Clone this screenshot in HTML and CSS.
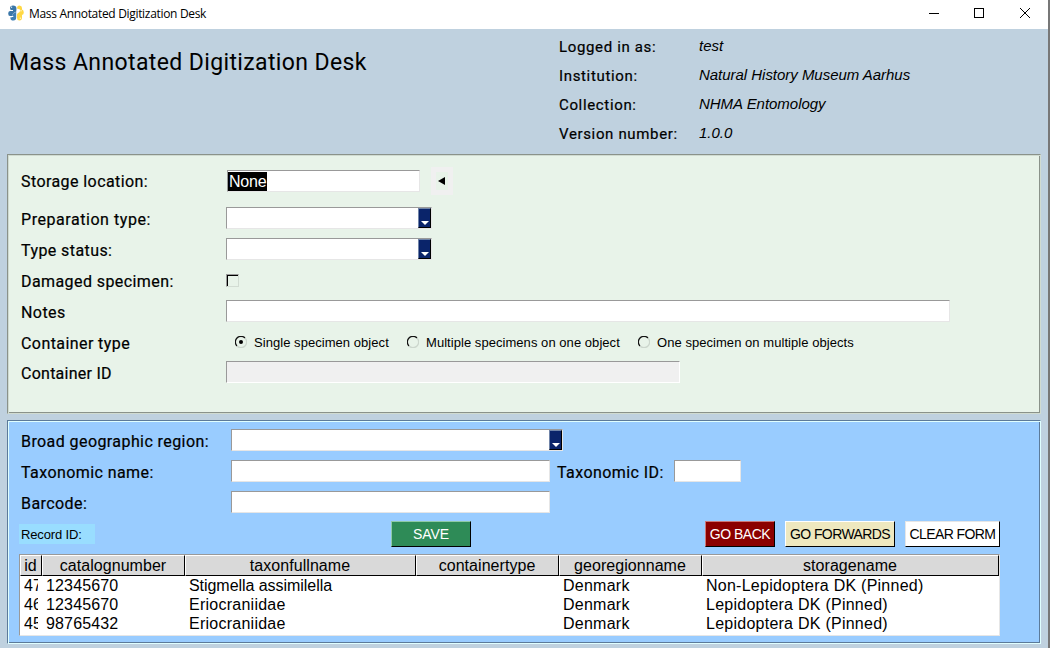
FILE: index.html
```html
<!DOCTYPE html>
<html lang="en">
<head>
<meta charset="utf-8">
<title>Mass Annotated Digitization Desk</title>
<link rel="stylesheet" href="styles.css">
</head>
<body>
<div class="window">
  <div class="titlebar">
    <svg class="logo" width="16" height="16" viewBox="0 0 16 16">
      <path d="M2 5V3Q2 .4 5 .4Q8.400 .4 8.400 3V5.500Q8.400 7 6.500 7.500Q4.500 8 4.500 10V11H2Q.2 11 .2 8.500Q.2 6.200 2 6H5V5Z" fill="#3a76a8"/>
      <path d="M4.500 11V10Q4.500 8.500 6 8Q8 7.400 8.200 6V12.500Q8.200 15.500 5.500 15.600Q2.500 15.600 2.400 13V12H5.300V11Z" fill="#3f7fb4"/>
      <path d="M9 3.500Q9 .4 11.500 .4Q14 .5 14 3V4.500Q15.800 5 15.800 7.500Q15.800 9.800 14 10V12.500Q14 15.500 11.500 15.600Q9 15.500 9 13V9.500Q9.200 8.200 10.500 7.800Q12 7.300 12 5.500V4.500Z" fill="#ffd845"/>
      <path d="M0 4.300H3M1 12H4M12 5.800H14" stroke="#fff" stroke-width=".6"/>
      <circle cx="3.600" cy="2.200" r=".6" fill="#fff"/><circle cx="12.300" cy="13.200" r=".6" fill="#fff"/>
    </svg>
    <span class="caption">Mass Annotated Digitization Desk</span>
    <svg class="controls" width="104" height="12" viewBox="0 0 104 12" fill="none" stroke="#000" shape-rendering="crispEdges">
      <path d="M0 6.500H10M45.500 1.500H54.500V10.500H45.500Z"/>
      <path d="M91 1L101 11M101 1L91 11" shape-rendering="auto"/>
    </svg>
  </div>

  <header class="header">
    <h1>Mass Annotated Digitization Desk</h1>
    <dl class="session">
      <dt>Logged in as:</dt><dd>test</dd>
      <dt>Institution:</dt><dd>Natural History Museum Aarhus</dd>
      <dt>Collection:</dt><dd>NHMA Entomology</dd>
      <dt>Version number:</dt><dd>1.0.0</dd>
    </dl>
  </header>

  <section class="panel specimen">
    <div class="row storage"><span class="label">Storage location:</span><div class="field location"><span class="selected">None</span></div><div class="collapse"><svg width="7" height="8" viewBox="0 0 7 8"><path d="M0 4L7 0V8Z"/></svg></div></div>
    <div class="row"><span class="label prep">Preparation type:</span><div class="field combo"><i class="drop"></i></div></div>
    <div class="row"><span class="label">Type status:</span><div class="field combo"><i class="drop"></i></div></div>
    <div class="row"><span class="label">Damaged specimen:</span><i class="checkbox"></i></div>
    <div class="row"><span class="label">Notes</span><div class="field notes"></div></div>
    <div class="row kinds"><span class="label">Container type</span>
      <div class="radios">
        <span class="radio one"><svg width="12" height="12" viewBox="0 0 12 12"><path class="dark" d="M2 10A5.300 5.300 0 0 1 10 2"/><path class="lite" d="M10 2A5.300 5.300 0 0 1 2 10"/><circle cx="6" cy="6" r="2"/></svg>Single specimen object</span>
        <span class="radio two"><svg width="12" height="12" viewBox="0 0 12 12"><path class="dark" d="M2 10A5.300 5.300 0 0 1 10 2"/><path class="lite" d="M10 2A5.300 5.300 0 0 1 2 10"/></svg>Multiple specimens on one object</span>
        <span class="radio three"><svg width="12" height="12" viewBox="0 0 12 12"><path class="dark" d="M2 10A5.300 5.300 0 0 1 10 2"/><path class="lite" d="M10 2A5.300 5.300 0 0 1 2 10"/></svg>One specimen on multiple objects</span>
      </div>
    </div>
    <div class="row"><span class="label tight">Container ID</span><div class="field disabled"></div></div>
  </section>

  <section class="panel taxonomy">
    <div class="row"><span class="label">Broad geographic region:</span><div class="field region"><i class="drop"></i></div></div>
    <div class="row"><span class="label">Taxonomic name:</span><div class="field wide"></div><span class="label taxid">Taxonomic ID:</span><div class="field short"></div></div>
    <div class="row"><span class="label">Barcode:</span><div class="field wide"></div></div>
    <div class="actions">
      <span class="record">Record ID:</span>
      <button class="save">SAVE</button>
      <button class="back">GO BACK</button>
      <button class="forward">GO FORWARDS</button>
      <button class="clear">CLEAR FORM</button>
    </div>
    <div class="tableframe">
      <table>
        <colgroup><col class="c1"><col class="c2"><col class="c3"><col class="c2"><col class="c2"><col class="c6"></colgroup>
        <thead><tr><th>id</th><th>catalognumber</th><th>taxonfullname</th><th>containertype</th><th>georegionname</th><th>storagename</th></tr></thead>
        <tbody>
          <tr><td><div>47</div></td><td class="num">12345670</td><td class="taxon">Stigmella assimilella</td><td></td><td>Denmark</td><td>Non-Lepidoptera DK (Pinned)</td></tr>
          <tr><td><div>46</div></td><td class="num">12345670</td><td>Eriocraniidae</td><td></td><td>Denmark</td><td>Lepidoptera DK (Pinned)</td></tr>
          <tr><td><div>45</div></td><td class="num">98765432</td><td>Eriocraniidae</td><td></td><td>Denmark</td><td>Lepidoptera DK (Pinned)</td></tr>
        </tbody>
      </table>
    </div>
  </section>
</div>
</body>
</html>
```
FILE: styles.css
```css
* { box-sizing: border-box; }
body { margin: 0; font-family: "Liberation Sans", Arial, sans-serif; color: #000; }
.window { width: 1050px; height: 648px; background: #bfd1df; border-right: 2px solid #777; overflow: hidden; }

.titlebar { height: 29px; background: #fff; display: flex; align-items: center; padding: 0 15px 3px 8px; }
.caption { margin-left: 5px; font: 12px "Open Sans", sans-serif; letter-spacing: -.32px; white-space: nowrap; }
.controls { margin-left: auto; }

.header { height: 125px; display: flex; }
h1 { margin: 19px 0 0 9px; width: 550px; font: 23px/30px Roboto, sans-serif; letter-spacing: .38px; white-space: nowrap; }
.session { margin: 3px 0 0; display: grid; grid-template-columns: 140px auto; grid-auto-rows: 29px; line-height: 29px; white-space: nowrap; }
.session dt { padding-top: 1px; font-family: Roboto, sans-serif; font-size: 15px; font-weight: 450; letter-spacing: .65px; -webkit-text-stroke: .2px #000; }
.session dd { margin: -1px 0 0; font-size: 15px; font-style: italic; letter-spacing: -.03px; }

.panel { width: 1034px; margin-left: 7px; border: 1px solid; padding: 0 0 0 12px; }
.specimen { height: 260px; background: #e8f3e9; border-color: #8a928a #d0dbd1 #d0dbd1 #8a928a; box-shadow: inset 1px 1px #d0dbd1, inset -1px -1px #8a928a; padding-top: 4px; }
.taxonomy { height: 224px; margin-top: 6px; background: #99ccff; border-color: #5c7a99 #e0ffff #e0ffff #5c7a99; box-shadow: inset 1px 1px #e0ffff, inset -1px -1px #5c7a99; padding-top: 4px; }

.row { display: flex; align-items: center; height: 31px; }
.row.storage { height: 44px; }
.row.kinds { height: 30px; }
.label { flex: none; width: 206px; padding: 3px 0 0 1px; font: 400 16px/20px Roboto, sans-serif; letter-spacing: .42px; white-space: nowrap; -webkit-text-stroke: .2px #000; }
.storage .label { padding-top: 1px; }
.prep { letter-spacing: .55px; }
.tight { letter-spacing: .25px; }
.taxonomy .label { width: 211px; }
.taxonomy .taxid { width: 124px; padding-left: 7px; }
.field { flex: none; height: 22px; margin-bottom: 1px; background: #fff; border: 1px solid; border-color: #999 #e6e6e6 #e6e6e6 #999; }
.location { width: 193px; margin: 0 0 0 1px; padding: 1px 1px 1px 0; }
.selected { display: block; width: 39px; height: 19px; padding-left: 1px; background: #000; color: #fff; font-size: 16px; line-height: 20px; letter-spacing: -.2px; }
.collapse { margin-left: 11px; width: 22px; height: 28px; border: 5px solid #f0f0f0; display: flex; align-items: center; justify-content: center; padding-right: 1px; }
.combo { width: 206px; }
.region { width: 332px; }
.combo, .region { display: flex; justify-content: flex-end; }
.drop { width: 13px; height: 20px; background: #0a246a; border: 1px solid; border-color: #7084a8 #000 #000 #7084a8; display: flex; justify-content: center; align-items: flex-end; padding: 0 0 2px; }
.drop::after { content: ""; border: 4px solid transparent; border-top-color: #fff; border-bottom: 0; }
.notes { width: 724px; }
.disabled { width: 454px; background: #f0f0f0; border-right-color: #fff; border-bottom-color: #fff; }
.wide { width: 319px; }
.short { width: 67px; }
.checkbox { width: 13px; height: 13px; border: 1px solid; border-color: #999 #d2dcd3 #d2dcd3 #999; box-shadow: inset 1px 1px #000; }

.radios { display: flex; padding-left: 9px; }
.radio { display: flex; align-items: center; gap: 7px; font-size: 13px; letter-spacing: .05px; white-space: nowrap; }
.one { width: 172px; }
.two { width: 231px; }
.radio svg path { fill: none; stroke-width: 1.300; }
.radio .dark { stroke: #111; }
.radio .lite { stroke: #ccd6cd; }

.actions { display: flex; height: 26px; margin-top: 3px; align-items: center; margin-left: -1px; }
.record { width: 76px; height: 20px; margin-right: 296px; background: #99ddff; font-size: 13px; line-height: 20px; padding: 1px 0 0 2px; letter-spacing: -.15px; }
button { height: 26px; padding: 0; margin: 0; border: 1px solid; border-right-color: #000; border-bottom-color: #000; font: 14px "Liberation Sans", Arial, sans-serif; letter-spacing: -.3px; white-space: nowrap; }
.save { width: 80px; margin-right: 234px; background: #2e8b57; color: #fff; letter-spacing: -.1px; border-top-color: #8fc9a7; border-left-color: #8fc9a7; }
.back { width: 70px; margin-right: 10px; background: #8b0000; color: #fff; letter-spacing: -.5px; border-top-color: #c77; border-left-color: #c77; }
.forward { width: 110px; margin-right: 10px; background: #eee8bf; color: #000; letter-spacing: -.6px; border-top-color: #fff; border-left-color: #fff; }
.clear { width: 95px; background: #fff; color: #000; letter-spacing: -.6px; border-top-color: #e6e6e6; border-left-color: #e6e6e6; }

.tableframe { width: 981px; height: 82px; margin: 7px 0 0 -1px; background: #fff; border: 1px solid; border-color: #999 #e6e6e6 #e6e6e6 #999; }
table { table-layout: fixed; width: 979px; border-collapse: separate; border-spacing: 0; font-size: 16px; }
.c1 { width: 22px; }
.c2 { width: 143px; }
.c3 { width: 231px; }
.c6 { width: 297px; }
th { height: 21px; padding: 0 1px 0 0; font-weight: normal; line-height: 19px; background: #d9d9d9; border: 1px solid; border-color: #fff #000 #000 #fff; letter-spacing: .05px; }
td { height: 19px; line-height: 19px; padding: 0 0 0 4px; white-space: nowrap; letter-spacing: .25px; }
td.num { letter-spacing: .15px; }
td.taxon { letter-spacing: -.05px; }
td div { width: 14px; overflow: hidden; letter-spacing: 0; }
```
